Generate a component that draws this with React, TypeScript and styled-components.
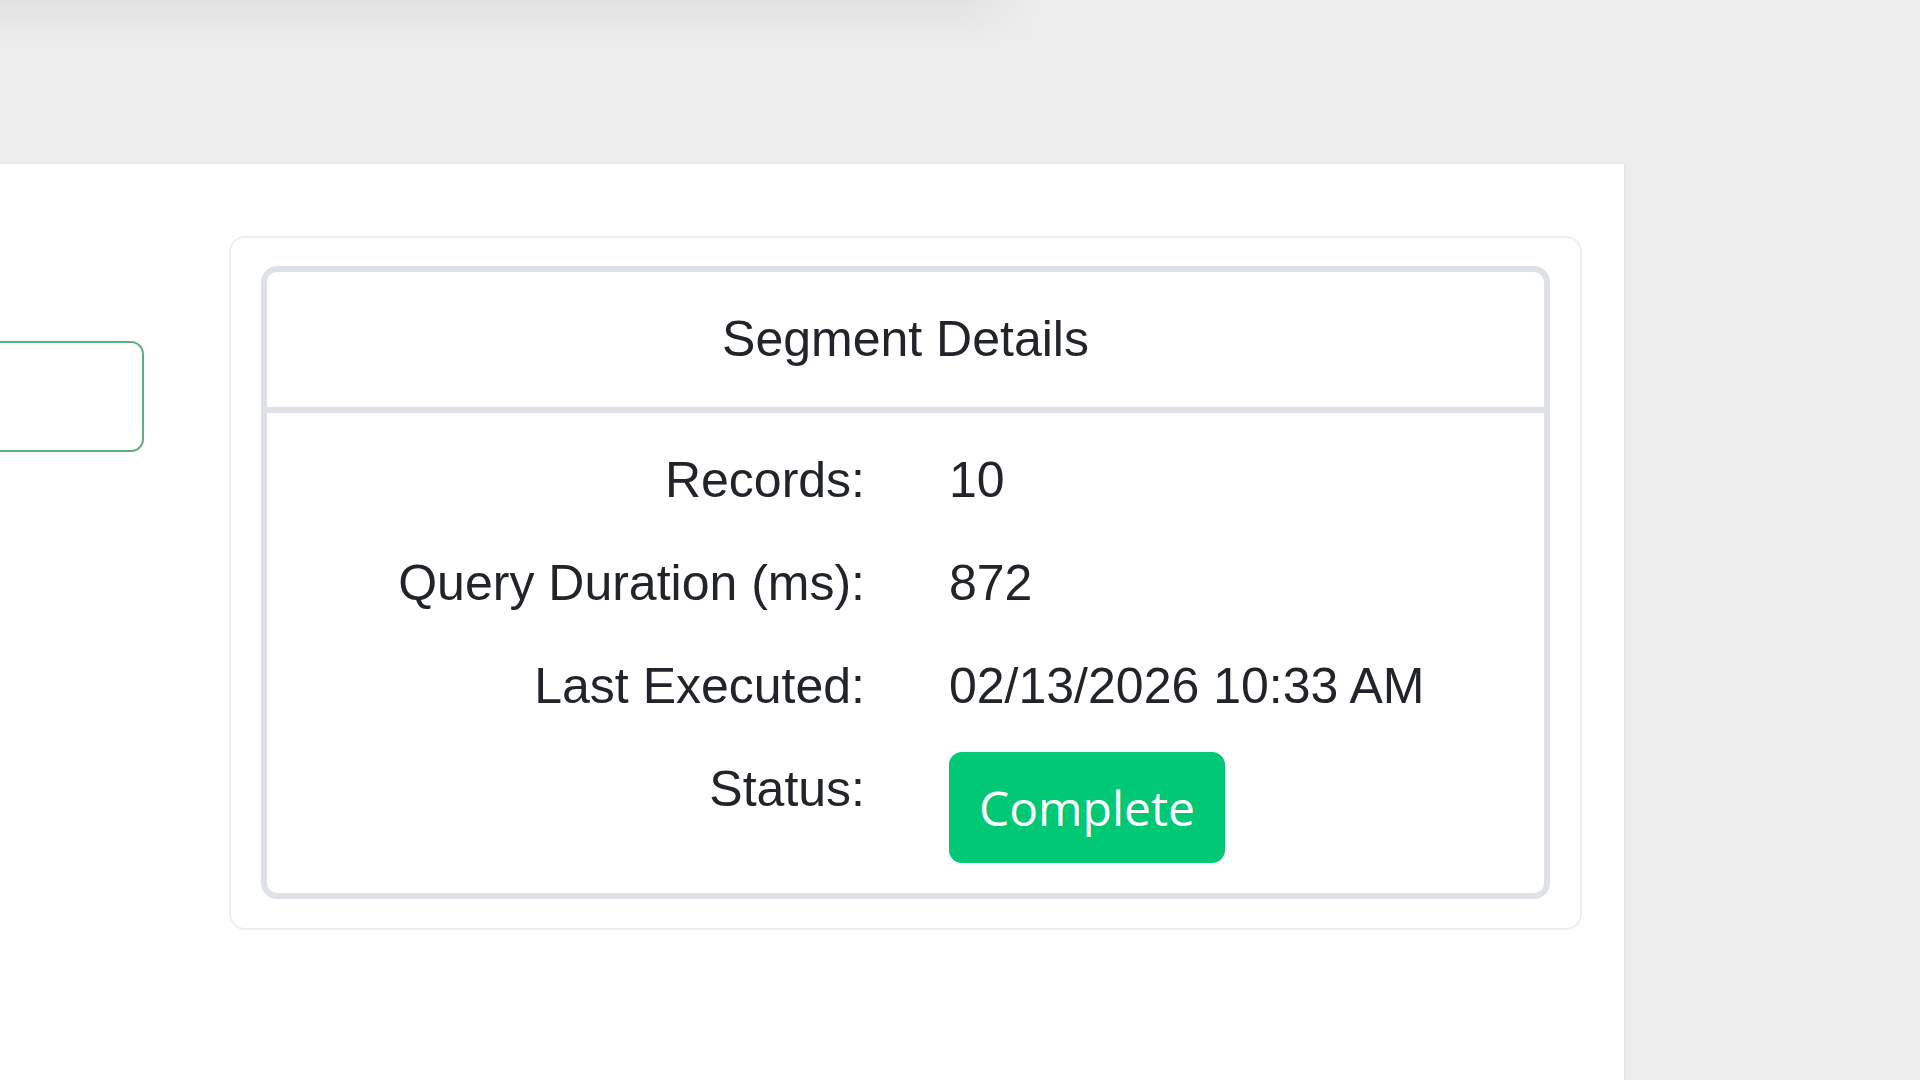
import React from "react";
import styled, { createGlobalStyle } from "styled-components";

const GlobalStyle = createGlobalStyle`
  html, body {
    margin: 0;
    padding: 0;
    height: 100%;
    overflow: hidden;
    background: #ededed;
  }
  #root {
    height: 100%;
  }
  * {
    box-sizing: border-box;
  }
`;

const Page = styled.div`
  display: flex;
  flex-direction: column;
  height: 100vh;
  font-family: "Liberation Sans", Arial, sans-serif;
  color: #212529;
`;

const TopArea = styled.div`
  height: 164px;
  flex: none;
`;

const TopShade = styled.div`
  width: 1040px;
  height: 46px;
  background: linear-gradient(to bottom, rgba(0, 0, 0, 0.045), rgba(0, 0, 0, 0));
  -webkit-mask-image: linear-gradient(to right, #000 0, #000 960px, transparent 1040px);
  mask-image: linear-gradient(to right, #000 0, #000 960px, transparent 1040px);
`;

const Panel = styled.main`
  flex: 1;
  width: 1624px;
  background: #ffffff;
  box-shadow: 1px 0 2px rgba(0, 0, 0, 0.06);
  padding: 72px 42px 0 0;
  display: flex;
  align-items: flex-start;
  gap: 85px;
  overflow: hidden;
`;

const SearchField = styled.div`
  flex: none;
  width: 444px;
  height: 111px;
  margin-left: -300px;
  margin-top: 105px;
  border: 2px solid #5eae84;
  border-radius: 13px;
  background: #ffffff;
`;

const OuterCard = styled.section`
  flex: none;
  width: 1353px;
  border: 2px solid #eceef1;
  border-radius: 16px;
  padding: 28px 30px 29px;
  background: #ffffff;
`;

const DetailsCard = styled.div`
  border: 6px solid #dee2e6;
  border-radius: 16px;
  background: #ffffff;
  overflow: hidden;
`;

const CardHeader = styled.header`
  padding: 30px 0;
  border-bottom: 6px solid #dee2e6;
  text-align: center;
  font-size: 50px;
  line-height: 75px;
`;

const CardBody = styled.div`
  padding: 30px 0;
  display: grid;
  grid-template-columns: 598px 1fr;
  column-gap: 84px;
  row-gap: 28px;
  align-items: start;
`;

const Label = styled.div`
  text-align: right;
  font-size: 50px;
  line-height: 75px;
`;

const Value = styled.div`
  text-align: left;
  font-size: 50px;
  line-height: 75px;
`;

const StatusBadge = styled.span<{ $tone: "success" | "pending" }>`
  display: inline-block;
  padding: 19.5px 30px;
  border-radius: 13px;
  background: ${(p) => (p.$tone === "success" ? "#00c875" : "#fdab3d")};
  color: #ffffff;
  font-family: "Open Sans", "Noto Sans", sans-serif;
  font-size: 48px;
  line-height: 72px;
`;

const details: { label: string; value: string }[] = [
  { label: "Records:", value: "10" },
  { label: "Query Duration (ms):", value: "872" },
  { label: "Last Executed:", value: "02/13/2026 10:33 AM" },
];

export default function App() {
  return (
    <>
      <GlobalStyle />
      <Page>
        <TopArea>
          <TopShade />
        </TopArea>
        <Panel>
          <SearchField />
          <OuterCard>
            <DetailsCard>
              <CardHeader>Segment Details</CardHeader>
              <CardBody>
                {details.map((d) => (
                  <React.Fragment key={d.label}>
                    <Label>{d.label}</Label>
                    <Value>{d.value}</Value>
                  </React.Fragment>
                ))}
                <Label>Status:</Label>
                <Value>
                  <StatusBadge $tone="success">Complete</StatusBadge>
                </Value>
              </CardBody>
            </DetailsCard>
          </OuterCard>
        </Panel>
      </Page>
    </>
  );
}
